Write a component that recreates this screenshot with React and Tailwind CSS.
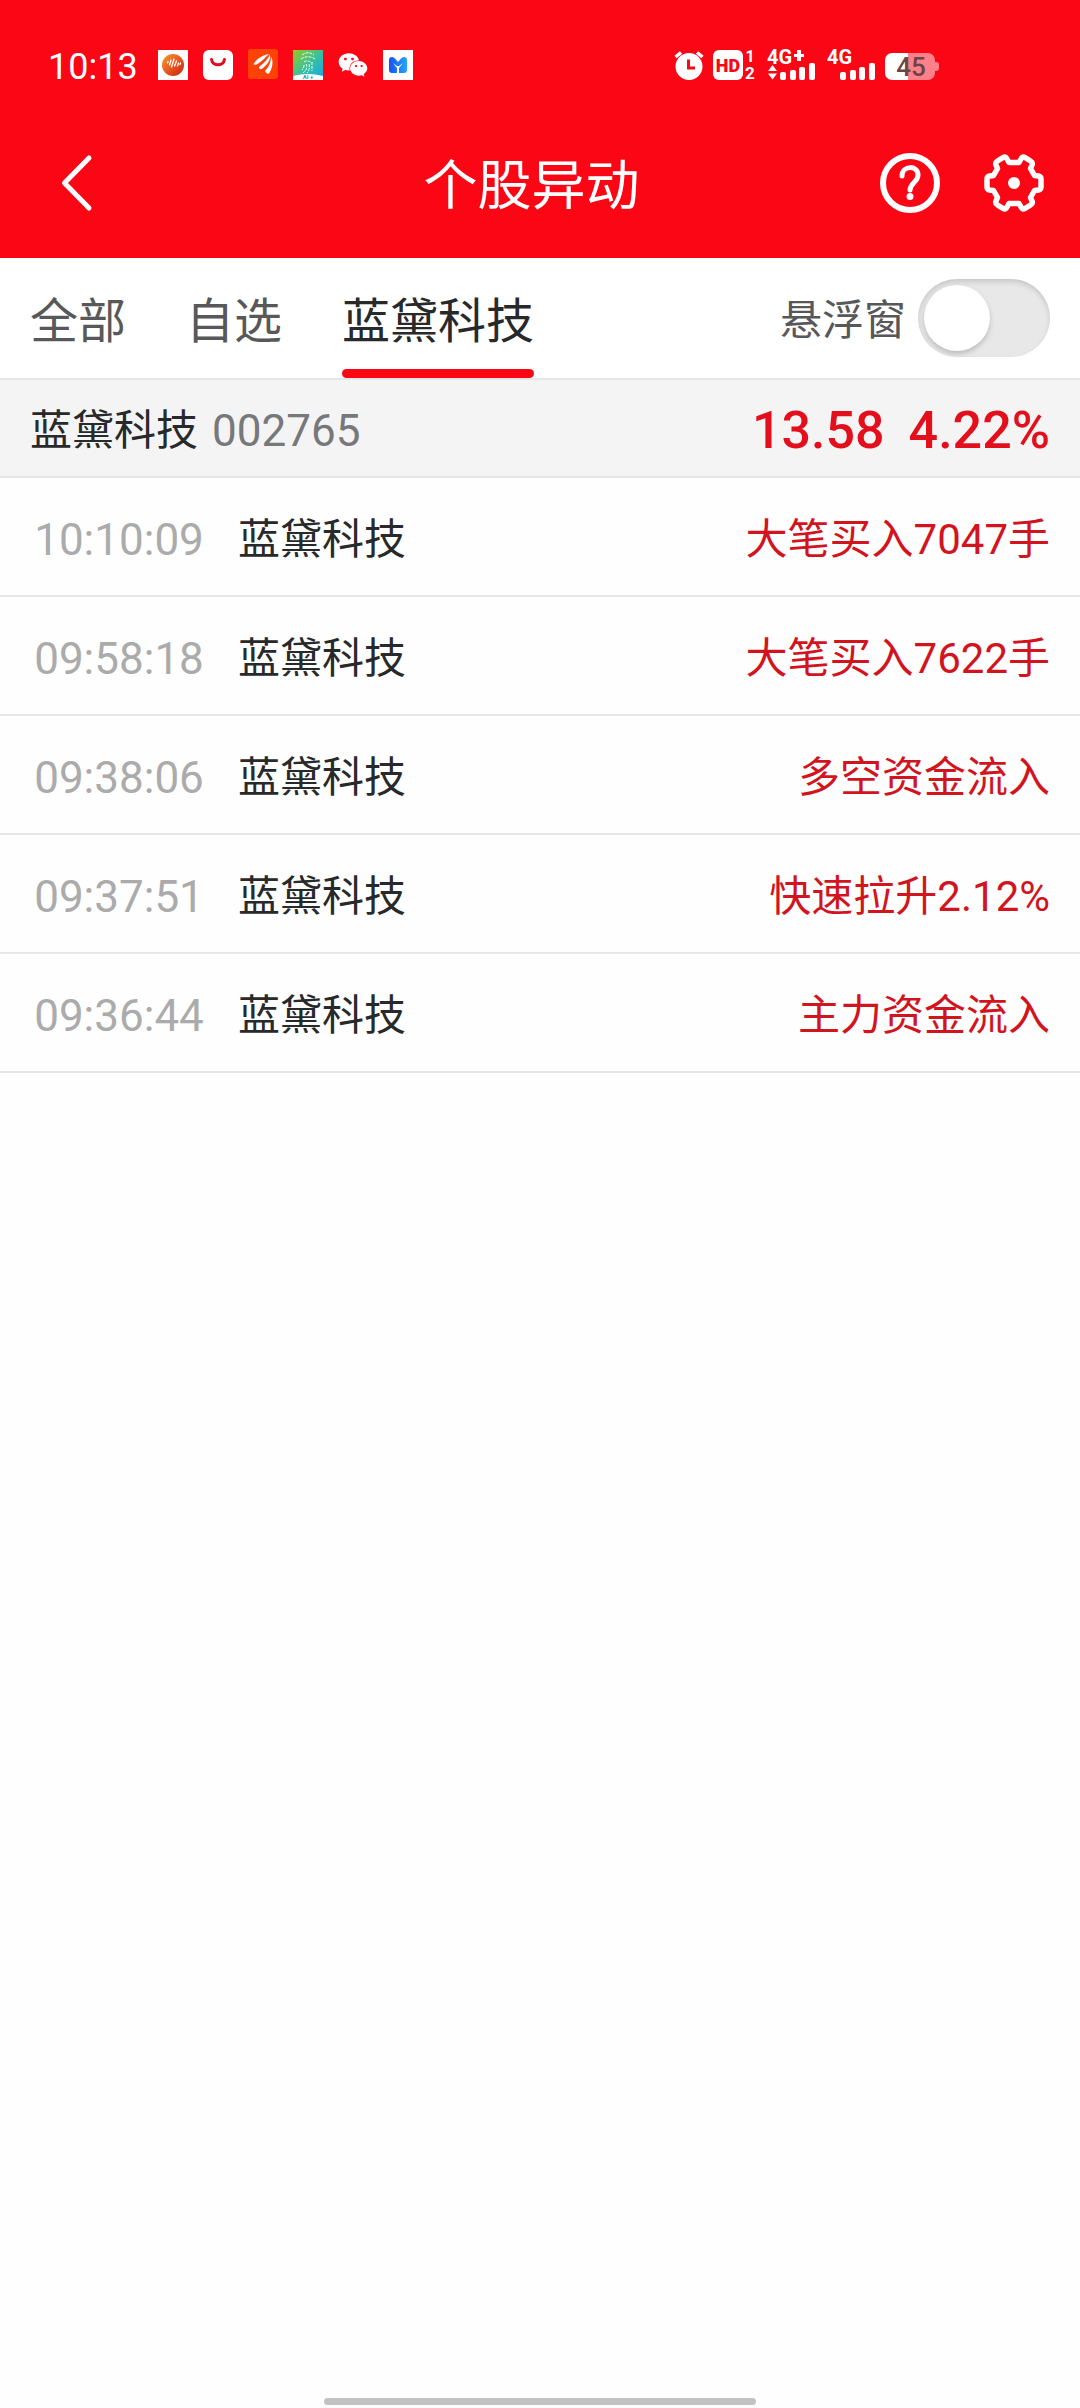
import { useState } from 'react';
import { FaWeixin } from 'react-icons/fa';

const tabs = ['全部', '自选', '蓝黛科技'];

const events = [
  { time: '10:10:09', name: '蓝黛科技', text: '大笔买入7047手' },
  { time: '09:58:18', name: '蓝黛科技', text: '大笔买入7622手' },
  { time: '09:38:06', name: '蓝黛科技', text: '多空资金流入' },
  { time: '09:37:51', name: '蓝黛科技', text: '快速拉升2.12%' },
  { time: '09:36:44', name: '蓝黛科技', text: '主力资金流入' },
];

function NotificationIcons() {
  return (
    <div className="flex items-center gap-[15px]">
      <svg className="size-[30px]" viewBox="0 0 30 30">
        <defs>
          <linearGradient id="ball" x1="0" y1="0" x2="1" y2="1">
            <stop offset="0" stopColor="#f0a030" />
            <stop offset="0.5" stopColor="#e85a20" />
            <stop offset="1" stopColor="#c81e10" />
          </linearGradient>
        </defs>
        <rect width="30" height="30" fill="#fff" />
        <circle cx="15" cy="15" r="11" fill="url(#ball)" />
        <path d="M10 11.500l-.5 1.500M13 10l-1.500 5M16 9l-2.500 8M18.500 11l-2 5M20.500 13l-1 3M22.500 13l-.5 1.500" stroke="#fff" strokeWidth="1.300" strokeLinecap="round" fill="none" />
      </svg>
      <svg className="size-[30px]" viewBox="0 0 30 30">
        <rect width="30" height="30" rx="6" fill="#fff" />
        <path d="M8.500 9.500c1 7 12 7 13 0" stroke="#e01020" strokeWidth="3" strokeLinecap="round" fill="none" />
      </svg>
      <svg className="mb-[2px] size-[30px]" viewBox="0 0 30 30">
        <rect width="30" height="30" rx="3" fill="#ff4208" />
        <path d="M5.500 15C9 10 14 6 21 5C17 9 12 14 8.500 15.500C8 16 6 16 5.500 15z" fill="#fff" />
        <path d="M11 18C16 14 20 10 22 5.500C23 11 19 16 14.500 19.500C13 21 11 20 11 18z" fill="#fff" />
        <path d="M17 22C21 18 23 13 23 7.500C26 13 24 20 21 24.500C20 25 17.500 24 17 22z" fill="#fff" />
      </svg>
      <svg className="size-[30px] overflow-visible" viewBox="0 0 30 30">
        <defs>
          <linearGradient id="finger" x1="0" y1="0" x2="1" y2="1">
            <stop offset="0" stopColor="#9ac81e" />
            <stop offset="0.5" stopColor="#3cc09a" />
            <stop offset="1" stopColor="#10a8f0" />
          </linearGradient>
        </defs>
        <rect width="30" height="30" fill="url(#finger)" />
        <path d="M9 5c4-3 8-3 12 0M8 9c4-3 10-3 14 0M11 12c3-2 6-1 7 1M13 14c2 3 0 7-3 9M16 14c1 4 0 7-2 9M19 12v9M11 15c0 3-1 4-2 5" stroke="#e4fff4" strokeWidth="1" strokeDasharray="3 1" fill="none" />
        <path d="M0 26q15-4 30 0v4H0z" fill="#fff" />
        <text x="15" y="29" textAnchor="middle" fontSize="6" fontWeight="700" fill="#18a0b0">AI +</text>
      </svg>
      <FaWeixin className="size-[30px]" />
      <svg className="size-[30px]" viewBox="0 0 30 30">
        <defs>
          <linearGradient id="mark" x1="0" y1="0" x2="1" y2="0">
            <stop offset="0" stopColor="#1e50f0" />
            <stop offset="1" stopColor="#20a8f8" />
          </linearGradient>
        </defs>
        <rect width="30" height="30" fill="#fff" />
        <path d="M6 10q0-3 3-3q2 0 3 1.500l3 3.500l3-3.500q1-1.500 3-1.500q3 0 3 3v10q0 3-3 3h-5v-5l4-5l-4 3h-2l-4-3l4 5v5H9q-3 0-3-3z" fill="url(#mark)" />
      </svg>
    </div>
  );
}

function SignalIcon({ plus }) {
  return (
    <svg className="h-[30px] w-[47px] overflow-visible" viewBox="0 0 47 30" fill="#fff">
      <text x="-1" y="14" fontSize="20" fontWeight="700">4G</text>
      {plus && <path d="M29 0h4v4h3v3h-3v4h-4V7h-3V4h3zM0 21l4.500-6l4.500 6zM0 23.500h9l-4.500 6z" />}
      <rect x="12" y="22" width="6" height="8" rx="2" />
      <rect x="22" y="20" width="6" height="10" rx="2" />
      <rect x="31" y="17" width="6" height="13" rx="2" />
      <rect x="41" y="13" width="6" height="17" rx="2" />
    </svg>
  );
}

function StatusBar() {
  return (
    <div className="flex items-center justify-between pt-[42px] pr-[141px] pl-12">
      <div className="flex items-center gap-5">
        <span className="pt-1 text-[36px] leading-[42px]">10:13</span>
        <NotificationIcons />
      </div>
      <div className="flex items-center">
        <svg className="mr-[9px] size-[30px]" viewBox="0 0 30 30">
          <circle cx="15" cy="16.500" r="13.500" fill="#fff" />
          <path d="M1.500 7L7 2.500M28.500 7L23 2.500" stroke="#fff" strokeWidth="3.500" />
          <path d="M14.500 9.500v8.500h6.500" stroke="#fa0614" strokeWidth="3" fill="none" />
        </svg>
        <svg className="mr-3 h-[30px] w-[43px] overflow-visible" viewBox="0 0 43 30">
          <rect width="30" height="30" rx="6" fill="#fff" />
          <text x="15" y="22" textAnchor="middle" fontSize="18" fontWeight="900" fill="#fa0614">HD</text>
          <text x="37" y="12" textAnchor="middle" fontSize="16" fontWeight="700" fill="#fff">1</text>
          <text x="37" y="29" textAnchor="middle" fontSize="17" fontWeight="700" fill="#fff">2</text>
        </svg>
        <div className="flex gap-[13px]">
          <SignalIcon plus />
          <SignalIcon />
        </div>
        <svg className="ml-[10px] h-[30px] w-[54px] overflow-visible" viewBox="0 0 54 30">
          <path d="M23 3h20a7 7 0 0 1 7 7v2h1q3 0 3 3v3q0 3-3 3h-1v2a7 7 0 0 1-7 7H23z" fill="#ff8088" />
          <path d="M7 3h16v27H7a7 7 0 0 1-7-7V10a7 7 0 0 1 7-7z" fill="#fff" />
          <text x="26" y="26" textAnchor="middle" fontSize="26" fontWeight="500" fill="#6b4448">45</text>
        </svg>
      </div>
    </div>
  );
}

function TitleBar() {
  return (
    <div className="flex h-[150px] items-center px-9">
      <button aria-label="返回" className="flex w-[147px] pl-6">
        <svg className="h-[60px] w-9" viewBox="0 0 36 60" fill="none" stroke="#fff" strokeWidth="5" strokeLinecap="round" strokeLinejoin="round">
          <path d="M29 5L4.500 30L29 55" />
        </svg>
      </button>
      <h1 className="flex-1 pt-2 text-center text-[54px] leading-[66px]">个股异动</h1>
      <div className="flex gap-[44px]">
        <button aria-label="帮助">
          <svg className="size-[60px]" viewBox="0 0 60 60" fill="none" stroke="#fff">
            <circle cx="30" cy="30" r="27" strokeWidth="6" />
            <path d="M22 23c0-11 16-11 16-1c0 7-8 8-8 15" strokeWidth="5" strokeLinecap="round" />
            <circle cx="30" cy="43.500" r="3.500" fill="#fff" stroke="none" />
          </svg>
        </button>
        <button aria-label="设置">
          <svg className="size-[60px]" viewBox="-30 -30 60 60" fill="none" stroke="#fff" strokeWidth="5.500" strokeLinejoin="round" strokeLinecap="round">
            <path d="M-5 -20.500H5L7 -24Q8.500 -27 11 -25.500L16.500 -22Q19 -20.500 18 -18L16.500 -14.500L20.500 -7.500L24.500 -7Q27 -6.500 27 -4V4Q27 6.500 24.500 7L20.500 7.500L16.500 14.500L18 18Q19 20.500 16.500 22L11 25.500Q8.500 27 7 24L5 20.500H-5L-7 24Q-8.500 27 -11 25.500L-16.500 22Q-19 20.500 -18 18L-16.500 14.500L-20.500 7.500L-24.500 7Q-27 6.500 -27 4V-4Q-27 -6.500 -24.500 -7L-20.500 -7.500L-16.500 -14.500L-18 -18Q-19 -20.500 -16.500 -22L-11 -25.500Q-8.500 -27 -7 -24Z" />
            <circle r="6" fill="#fff" stroke="none" />
          </svg>
        </button>
      </div>
    </div>
  );
}

export default function App() {
  const [active, setActive] = useState('蓝黛科技');

  return (
    <div className="flex min-h-screen flex-col bg-[#fefefe] font-['Roboto','Noto_Sans_CJK_SC',sans-serif] text-[#28292b]">
      <header className="flex h-[258px] flex-col justify-between bg-[#fa0614] text-white">
        <StatusBar />
        <TitleBar />
      </header>

      {/* Вкладки + перемикач плаваючого вікна */}
      <div className="flex items-center justify-between border-b-2 border-[#e6e6e6] bg-white px-[30px]">
        <nav className="flex gap-[60px]">
          {tabs.map((tab) => (
            <button
              key={tab}
              onClick={() => setActive(tab)}
              className={`relative h-[120px] pt-2 text-[48px] leading-[60px] ${active === tab ? 'text-[#28292b]' : 'text-[#58585a]'}`}
            >
              {tab}
              {active === tab && <span className="absolute inset-x-0 bottom-0 h-[9px] rounded-full bg-[#fa0614]" />}
            </button>
          ))}
        </nav>
        <label className="flex items-center gap-3 text-[42px] leading-[60px] text-[#58585a]">
          <span className="pt-1.5">悬浮窗</span>
          <input type="checkbox" className="peer sr-only" />
          <span className="flex h-[78px] w-[132px] rounded-full bg-[#e8e8e8] p-[6px] shadow-[inset_0_3px_5px_#c8c8c8] peer-checked:justify-end peer-checked:bg-[#fa0614]">
            <span className="size-[66px] rounded-full bg-white shadow-[0_3px_5px_#bcbcbc]" />
          </span>
        </label>
      </div>

      {/* Поточна акція */}
      <div className="flex h-[98px] items-center justify-between border-b-2 border-[#e6e6e6] bg-[#f4f4f4] px-[30px] pt-1.5">
        <div className="flex items-center gap-[14px]">
          <span className="text-[42px] leading-[60px]">蓝黛科技</span>
          <span className="text-[44px] leading-[60px] text-[#77787a]">002765</span>
        </div>
        <div className="flex gap-6 text-[52px] leading-[60px] font-medium text-[#e30f1c]">
          <span>13.58</span>
          <span>4.22%</span>
        </div>
      </div>

      <table className="w-full border-separate border-spacing-0 text-[42px] leading-[60px]">
        <tbody>
          {events.map((item) => (
            <tr key={item.time}>
              <td className="h-[119px] w-[238px] border-b-2 border-[#e6e6e6] px-[30px] pt-1.5 text-center text-[44px] text-[#ababab]">{item.time}</td>
              <td className="border-b-2 border-[#e6e6e6] pt-1.5">{item.name}</td>
              <td className="border-b-2 border-[#e6e6e6] pt-1.5 pr-[30px] text-right text-[#d2141f]">{item.text}</td>
            </tr>
          ))}
        </tbody>
      </table>

      <div className="mx-auto mt-auto mb-[3px] h-[7px] w-2/5 rounded-full bg-[#c2c2c2]" />
    </div>
  );
}
